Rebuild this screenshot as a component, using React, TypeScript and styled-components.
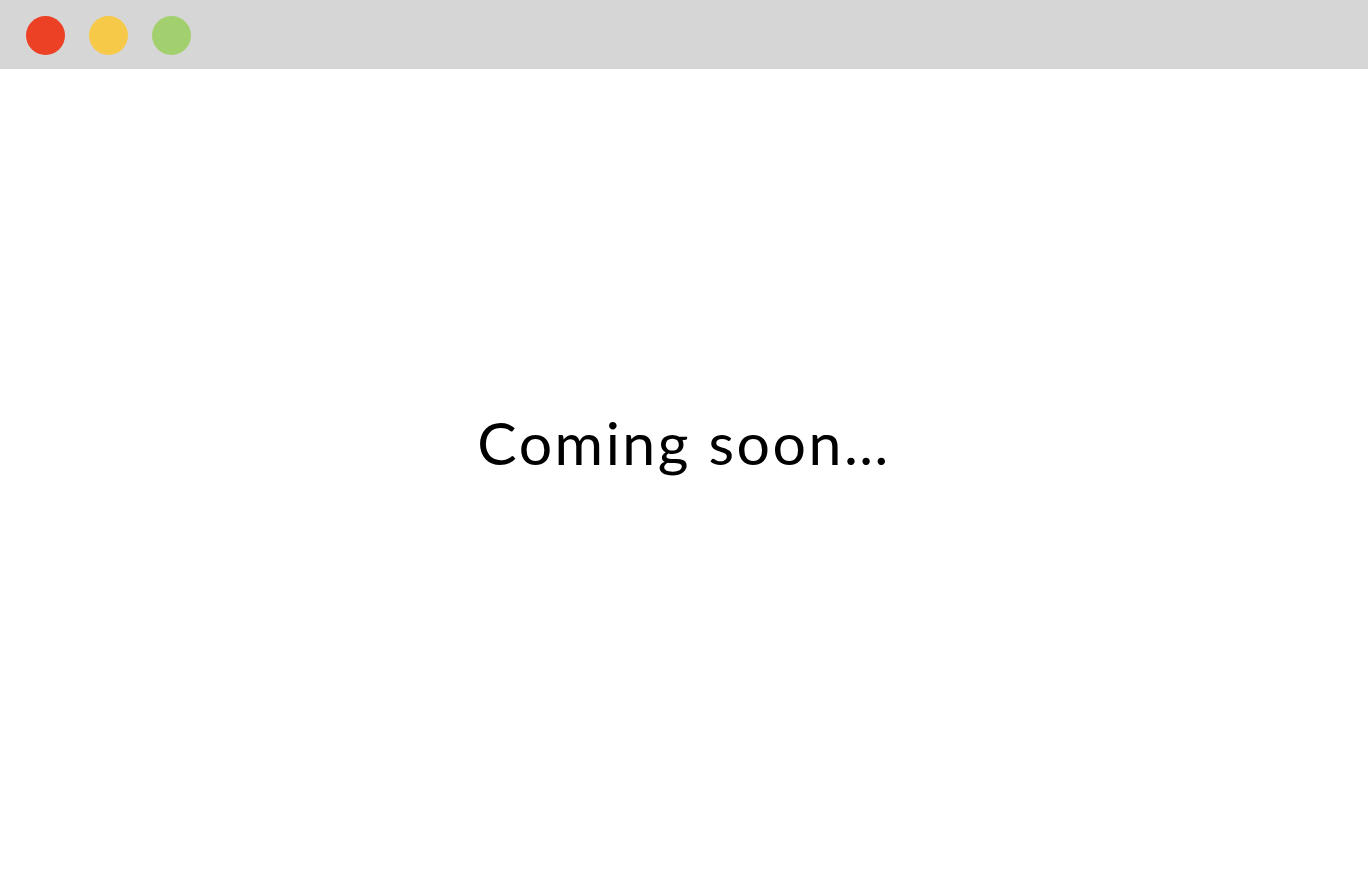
import React from "react";
import styled, { createGlobalStyle } from "styled-components";

const Global = createGlobalStyle`
  html, body { margin: 0; padding: 0; background: #ffffff; }
  #root { height: 874px; }
`;

const Window = styled.div`
  height: 874px;
  display: flex;
  flex-direction: column;
  background: #ffffff;
`;

const TitleBar = styled.div`
  height: 69px;
  flex: 0 0 69px;
  background: #d6d6d6;
  display: flex;
  align-items: center;
  gap: 24px;
  padding-left: 26px;
  box-sizing: border-box;
`;

const Dot = styled.span<{ $color: string }>`
  width: 39px;
  height: 39px;
  border-radius: 50%;
  background: ${(p) => p.$color};
  display: block;
  margin-top: 1px;
`;

const Body = styled.main`
  flex: 1;
  display: flex;
  align-items: center;
  justify-content: center;
  padding-bottom: 58px;
`;

const Heading = styled.h1`
  margin: 0;
  font-family: Lato, "Open Sans", sans-serif;
  font-weight: 400;
  font-size: 59px;
  color: #000000;
  letter-spacing: 2.5px;
`;

export default function App() {
  return (
    <>
      <Global />
      <Window>
        <TitleBar>
          <Dot $color="#ec4125" />
          <Dot $color="#f7c948" />
          <Dot $color="#a3d06e" />
        </TitleBar>
        <Body>
          <Heading>Coming soon…</Heading>
        </Body>
      </Window>
    </>
  );
}
